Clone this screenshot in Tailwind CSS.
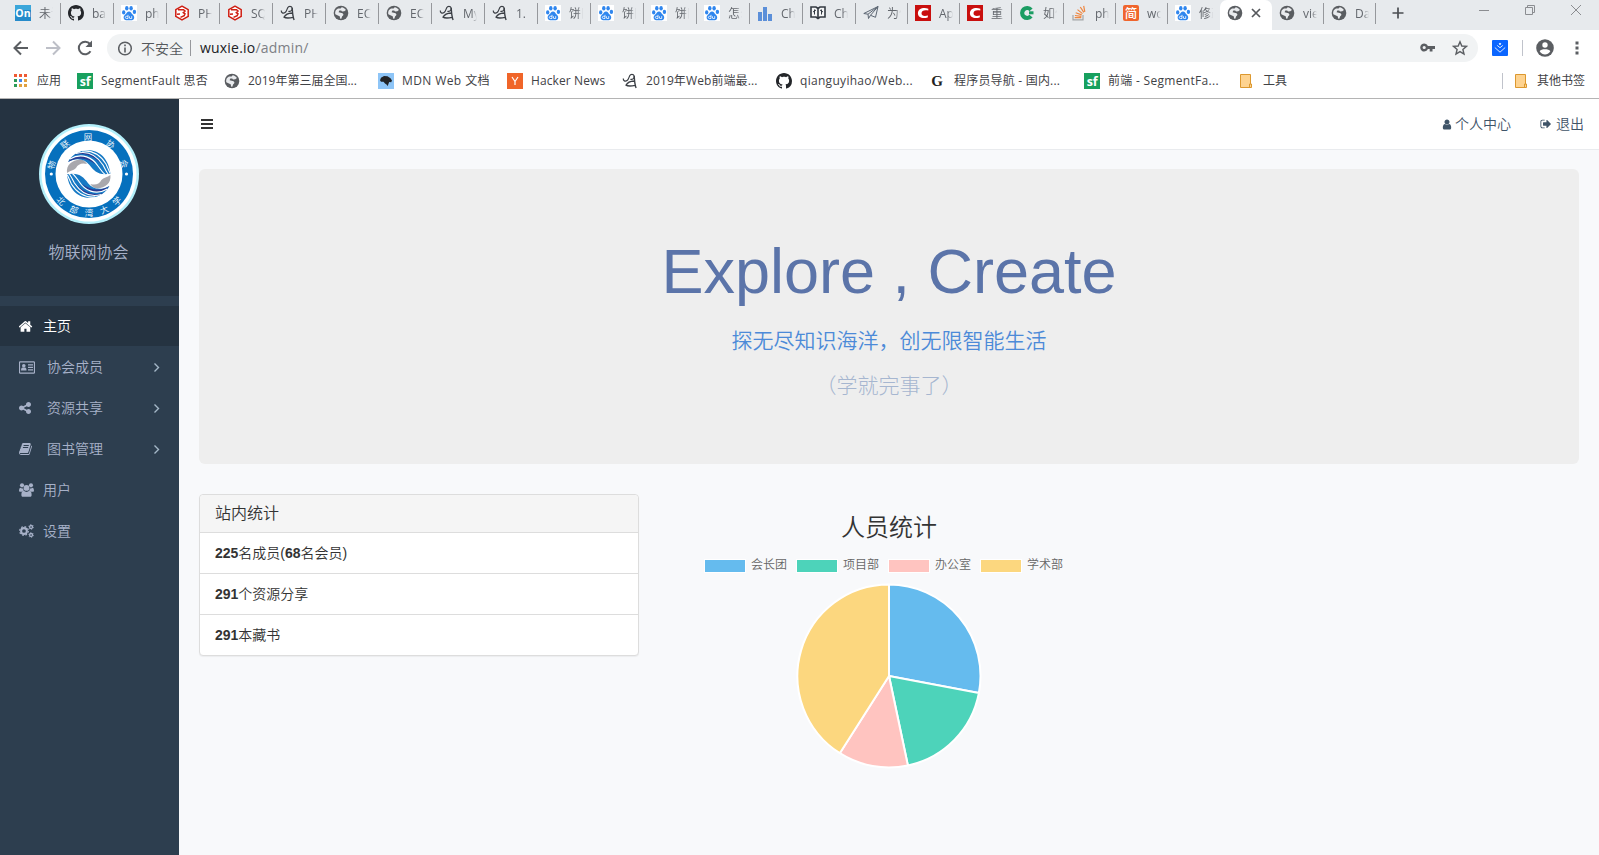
<!DOCTYPE html>
<html lang="zh-CN">
<head>
<meta charset="utf-8">
<title>物联网协会</title>
<script src="https://cdn.jsdelivr.net/npm/@tailwindcss/browser@4"></script>
</head>
<body class="h-[855px] w-[1599px] overflow-hidden bg-[#f8f9fb] font-['Liberation_Sans','Noto_Sans_CJK_SC',sans-serif] text-[14px] font-[350] text-[#333]">
<svg class="hidden">
  <symbol id="globe" viewBox="0 0 16 16"><circle cx="8" cy="8" r="7.300" fill="#5a5d61"/><path d="M8.700 2.200c1.600.2 3.400 1.300 4.200 2.900L11.300 6.300 9 6.500 8.200 5.400 6.300 5.600 5.600 7.200 7.600 7.800 10 8.200 10.600 9.900 9.200 11.300 8.300 13.700 7 13.600 6.900 11.600 5 10.400 2.300 9.300c-.3-1.500-.1-3 .7-4.300l2-1.400 2.600-.1z" fill="#e9ebee"/><path d="M8 6.900l5.500.6-1.200 3.600-2-.3.600-1.500-1-.8z" fill="#5a5d61"/></symbol>
  <symbol id="github" viewBox="0 0 16 16"><path fill="#24262a" d="M8 0C3.580 0 0 3.580 0 8c0 3.540 2.290 6.530 5.470 7.590.4.070.55-.17.55-.38 0-.19-.01-.82-.01-1.490-2.010.37-2.530-.49-2.690-.94-.09-.23-.48-.94-.82-1.130-.28-.15-.68-.52-.01-.53.63-.01 1.080.58 1.230.82.720 1.210 1.870.87 2.330.66.070-.52.280-.87.510-1.070-1.780-.2-3.640-.89-3.640-3.950 0-.87.310-1.590.820-2.150-.08-.2-.36-1.020.08-2.120 0 0 .67-.21 2.200.82.640-.18 1.320-.27 2-.27s1.360.09 2 .27c1.530-1.040 2.200-.82 2.200-.82.440 1.100.160 1.920.08 2.120.510.560.820 1.270.820 2.150 0 3.070-1.870 3.750-3.650 3.950.290.250.540.730.540 1.480 0 1.070-.01 1.930-.01 2.200 0 .21.150.46.550.38A8 8 0 0 0 16 8c0-4.420-3.580-8-8-8z"/></symbol>
  <symbol id="baidu" viewBox="0 0 16 16"><path fill="#fff" d="M0 0h16v16H0z"/><g fill="#2f86ee"><ellipse cx="2.700" cy="7.400" rx="1.700" ry="2.100"/><ellipse cx="5.800" cy="3.300" rx="1.700" ry="2.300"/><ellipse cx="10.100" cy="3.300" rx="1.700" ry="2.300"/><ellipse cx="13.400" cy="6.900" rx="1.700" ry="2.100"/><path d="M8 6.600c1.900 0 2.300 1.900 3.900 3.200 1.900 1.500 1.900 5.400-1.100 5.400H5.200c-3 0-3.300-3.900-1.200-5.400C5.700 8.500 6.200 6.600 8 6.600z"/></g><path d="M7 9.800v3.700H5.300c-1.300 0-1.300-2.200 0-2.200H7m1.500 0v1.800c0 .3.200.4.600.4h1.600v-2.300" fill="none" stroke="#fff" stroke-width=".8"/></symbol>
  <symbol id="hex" viewBox="0 0 16 16"><path d="M8 1.200l6.200 3.500v6.700L8 14.900l-6.200-3.500V4.700z" fill="#fff" stroke="#cf1e12" stroke-width="1.500" stroke-linejoin="round"/><path d="M4 4.700h5.500L11 6 9.300 7.600l1.700 1.200-.8 1.800-3.700 1.800M3 9.200l3-.2" fill="none" stroke="#cf1e12" stroke-width="1.500"/></symbol>
  <symbol id="zhang" viewBox="0 0 16 16"><path d="M1.300 5.500c-.3 2.300 1.900 3.300 3.800 2 1.500-1 2-3.500 2.600-4.800.8-1.700 3.700-1.700 4.400 0 .8 2.100-1.700 4.400-3.700 3.500" fill="none" stroke="#3b3f45" stroke-width="1.200"/><path d="M12.200 3c.3 4.500.4 8.300 1.900 12M12 8C9 8.200 5.500 9.500 4.100 12.100c1.300 1 6.300.8 9.100.3" fill="none" stroke="#3b3f45" stroke-width="1.400"/></symbol>
  <symbol id="cred" viewBox="0 0 16 16"><path fill="#c90f0e" d="M0 0h16v16H0z"/><path d="M13.300 5.500V3.700C8 2.100 3 3.800 2.900 8.300c0 4.300 4.700 5.600 9.800 4.100l.3-2c-3.600 1-6.500.5-6.500-2.100 0-2.800 3-3.700 6.800-2.800z" fill="#fff"/></symbol>
  <symbol id="folder" viewBox="0 0 16 16"><path d="M1.500 1.500h10v9.500h1v3.500h-11z" fill="#fed390" stroke="#dc982f"/><path d="M10.500 14v-3h1.500" fill="none" stroke="#dc982f"/></symbol>
  <symbol id="sf" viewBox="0 0 16 16"><path fill="#18a05e" d="M0 0h16v16H0z"/><text x="8.200" y="12.500" text-anchor="middle" font-family="Open Sans" font-weight="700" font-size="12.500" fill="#fff">sf</text></symbol>
  <symbol id="chev" viewBox="0 0 8 12"><path d="M1.500 2l4 4-4 4" fill="none" stroke="#a5b8c8" stroke-width="1.400"/></symbol>
</svg>

<!-- Browser tab strip -->
<div class="flex h-[30px] bg-[#e7eaed] pl-2 font-['Open_Sans','Noto_Sans_CJK_SC',sans-serif] text-[12px] leading-[18px] font-normal text-[#63676d] [&_i]:mt-[3px] [&_i]:ml-auto [&_i]:h-[21px] [&_i]:w-px [&_i]:bg-[#96989c] [&_span]:mt-[5px] [&_span]:ml-2 [&_span]:w-[14px] [&_span]:overflow-hidden [&_span]:whitespace-nowrap [&_span]:mask-r-from-60% [&_svg]:mt-[5px] [&_svg]:ml-[7px] [&_svg]:size-4 [&_svg]:shrink-0">
  <div class="flex w-[53px]"><svg viewBox="0 0 16 16"><path fill="#268bca" d="M0 0h16v16H0z"/><path fill="#3ba6da" d="M0 0h16v5H0z"/><text x="8" y="12.200" text-anchor="middle" font-family="Open Sans" font-weight="700" font-size="10.500" fill="#fff">On</text></svg><span>未读</span><i></i></div>
  <div class="flex w-[53px]"><svg><use href="#github"/></svg><span>ban</span><i></i></div>
  <div class="flex w-[53px]"><svg><use href="#baidu"/></svg><span>php</span><i></i></div>
  <div class="flex w-[53px]"><svg><use href="#hex"/></svg><span>PHP</span><i></i></div>
  <div class="flex w-[53px]"><svg><use href="#hex"/></svg><span>SQL</span><i></i></div>
  <div class="flex w-[53px]"><svg><use href="#zhang"/></svg><span>PHP</span><i></i></div>
  <div class="flex w-[53px]"><svg><use href="#globe"/></svg><span>EC</span><i></i></div>
  <div class="flex w-[53px]"><svg><use href="#globe"/></svg><span>EC</span><i></i></div>
  <div class="flex w-[53px]"><svg><use href="#zhang"/></svg><span>My</span><i></i></div>
  <div class="flex w-[53px]"><svg><use href="#zhang"/></svg><span>1.</span><i></i></div>
  <div class="flex w-[53px]"><svg><use href="#baidu"/></svg><span>饼图</span><i></i></div>
  <div class="flex w-[53px]"><svg><use href="#baidu"/></svg><span>饼图</span><i></i></div>
  <div class="flex w-[53px]"><svg><use href="#baidu"/></svg><span>饼图</span><i></i></div>
  <div class="flex w-[53px]"><svg><use href="#baidu"/></svg><span>怎么</span><i></i></div>
  <div class="flex w-[53px]"><svg viewBox="0 0 16 16"><path fill="#5b8fd9" d="M1 7h4v9H1zM6 2h4v14H6zM11 9h4v7h-4z"/></svg><span>Cha</span><i></i></div>
  <div class="flex w-[53px]"><svg viewBox="0 0 16 16"><path d="M1 2h5l2 1.500L10 2h5v10h-5l-2 1.500L6 12H1zM8 3.500v10" fill="#f5f6f7" stroke="#343a42" stroke-width="1.600"/><path d="M4.500 4.500v5M3 7l3-2M11.500 4.500v5M10 5l3 2" stroke="#343a42" fill="none"/></svg><span>Cha</span><i></i></div>
  <div class="flex w-[52px]"><svg viewBox="0 0 16 16"><path d="M.8 8.500L15 1.500l-2.500 10.800-5-2-2 3.200-.5-4.300zM5 9.200l10-7.700-7.500 8.800" fill="none" stroke="#5c6673" stroke-width="1"/></svg><span>为什</span><i></i></div>
  <div class="flex w-[52px]"><svg><use href="#cred"/></svg><span>Apa</span><i></i></div>
  <div class="flex w-[52px]"><svg><use href="#cred"/></svg><span>重</span><i></i></div>
  <div class="flex w-[52px]"><svg viewBox="0 0 16 16"><path d="M12 4.800A5 5 0 1 0 12 11.200" fill="none" stroke="#1c9d63" stroke-width="4.200"/><path d="M10 6.300h4.500v3H10z" fill="#1c9d63"/></svg><span>如何</span><i></i></div>
  <div class="flex w-[52px]"><svg viewBox="0 0 16 16"><path d="M2 10v4.800h10V10" fill="none" stroke="#a3a5a8" stroke-width="1.200"/><path d="M3.700 12.700h6.600M3.900 10.500l6.500.9M4.700 7.700l6 2.200M6.500 4.600l5 4M9.300 2l3.500 5.400M12.700.8l1.100 6" stroke="#ee8640" stroke-width="1.200" fill="none"/></svg><span>php</span><i></i></div>
  <div class="flex w-[52px]"><svg viewBox="0 0 16 16"><rect width="16" height="16" rx="2" fill="#f0652d"/><text x="8" y="12.500" text-anchor="middle" font-family="Noto Sans CJK SC" font-weight="500" font-size="12.500" fill="#fff">简</text></svg><span>wo</span><i></i></div>
  <div class="flex w-[52px]"><svg><use href="#baidu"/></svg><span>修改</span></div>
  <div class="flex w-[52px] rounded-t-[7px] bg-white"><svg><use href="#globe"/></svg><svg viewBox="0 0 16 16"><path d="M2 4l8 8M10 4l-8 8" stroke="#55585c" stroke-width="1.700"/></svg></div>
  <div class="flex w-[52px]"><svg><use href="#globe"/></svg><span>vie</span><i></i></div>
  <div class="flex w-[52px]"><svg><use href="#globe"/></svg><span>Da</span><i></i></div>
  <svg class="translate-x-[7px]" viewBox="0 0 16 16"><path d="M8 2.500v11M2.500 8h11" stroke="#4b4e52" stroke-width="1.700"/></svg>
  <div class="ml-auto flex gap-[23px] pr-[15px]">
    <svg class="-translate-y-1" viewBox="0 0 16 16"><path d="M3 9.500h10" stroke="#8b8d91"/></svg>
    <svg class="-translate-y-1" viewBox="0 0 16 16"><path d="M3.500 6.500h7v7h-7zM5.500 6.500v-2h7v7h-2" fill="none" stroke="#8b8d91"/></svg>
    <svg class="-translate-y-1" viewBox="0 0 16 16"><path d="M3 4l10 10M13 4L3 14" stroke="#8b8d91"/></svg>
  </div>
</div>

<!-- Address bar -->
<div class="flex h-[36px] items-center bg-white pl-[12px] font-['Open_Sans','Noto_Sans_CJK_SC',sans-serif] text-[14px] font-normal [&_svg]:shrink-0">
  <svg class="size-[18px]" viewBox="0 0 18 18"><path d="M16 9H3M9 2.500L2.500 9 9 15.500" fill="none" stroke="#5b5e62" stroke-width="2"/></svg>
  <svg class="ml-[14px] size-[18px]" viewBox="0 0 18 18"><path d="M2 9h13M9 2.500L15.500 9 9 15.500" fill="none" stroke="#bdbfc7" stroke-width="2"/></svg>
  <svg class="ml-[14px] size-[18px]" viewBox="0 0 18 18"><path d="M14.500 12.300A6.300 6.300 0 1 1 14 5" fill="none" stroke="#5b5e62" stroke-width="2"/><path d="M16 1.500V8H9.500z" fill="#5b5e62"/></svg>
  <div class="ml-[13px] flex h-[28px] w-[1371px] items-center rounded-full bg-[#f1f3f4] pl-[11px] pr-[10px]">
    <svg class="size-[15px]" viewBox="0 0 15 15"><circle cx="7" cy="7.500" r="6.300" fill="none" stroke="#5b5e62" stroke-width="1.500"/><path d="M7 6.500v5M7 3.500v1.800" stroke="#5b5e62" stroke-width="1.600"/></svg>
    <span class="ml-2 font-[350] text-[#55585c]">不安全</span>
    <span class="ml-[7px] h-4 w-px bg-[#96989c]"></span>
    <span class="ml-[9px] -translate-y-px tracking-[.2px] text-[#202124]">wuxie.io<span class="text-[#7d8085]">/admin/</span></span>
    <svg class="ml-auto size-4" viewBox="0 0 16 16"><path d="M7.900 6A4 4 0 1 0 7.900 9h1.800v2.500h2.800V9H15V6zM4.200 9.100a1.600 1.600 0 1 1 0-3.200 1.600 1.600 0 0 1 0 3.200z" fill="#5b5e62" fill-rule="evenodd"/></svg>
    <svg class="ml-4 size-4" viewBox="0 0 16 16"><path d="M8 1.800l1.800 4.200 4.600.4-3.500 3 1.100 4.600L8 11.600 4 14l1.100-4.600-3.500-3 4.600-.4z" fill="none" stroke="#5b5e62" stroke-width="1.400"/></svg>
  </div>
  <svg class="ml-[14px] size-4" viewBox="0 0 16 16"><rect width="16" height="16" rx="1" fill="#0a66ff"/><path d="M8 3l1 .9-1 1-1-1zM5.200 5.400L8 7.700l2.800-2.300M2.800 7.500L8 12.200l5.200-4.700" fill="none" stroke="#d9e8ff"/></svg>
  <span class="ml-[14px] h-4 w-px bg-[#c0c3cb]"></span>
  <svg class="ml-[13px] size-[18px]" viewBox="0 0 18 18"><circle cx="9" cy="9" r="8.800" fill="#5b5e62"/><circle cx="9" cy="6" r="2.700" fill="#fff"/><path d="M3.700 12.200C5 9.600 13 9.600 14.300 12.200 11.500 16.500 6.500 16.500 3.700 12.200z" fill="#fff"/></svg>
  <svg class="ml-[15px] size-4" viewBox="0 0 16 16"><path d="M6.500 1.500h3v3h-3zM6.500 6.500h3v3h-3zM6.500 11.500h3v3h-3z" fill="#5b5e62"/></svg>
</div>

<!-- Bookmarks bar -->
<div class="flex h-[33px] items-center border-b border-[#b4b4b4] bg-white pl-[13px] pb-[3px] font-['Open_Sans','Noto_Sans_CJK_SC',sans-serif] text-[12px] leading-4 font-normal whitespace-nowrap text-[#3f4246] [&>div]:flex [&>div]:shrink-0 [&>div]:items-center [&>div]:gap-2 [&_svg]:size-4 [&_svg]:shrink-0">
  <div class="w-[64px]"><svg viewBox="0 0 16 16"><path fill="#ef5a33" d="M1 1h3v3H1zM6 1h3v3H6zM11 1h3v3h-3z"/><path fill="#2a9b58" d="M1 6h3v3H1z"/><path fill="#3f86f0" d="M6 6h3v3H6z"/><path fill="#e0a040" d="M11 6h3v3h-3zM6 11h3v3H6zM11 11h3v3h-3z"/><path fill="#2a9b58" d="M1 11h3v3H1z"/></svg><span>应用</span></div>
  <div class="w-[147px]"><svg><use href="#sf"/></svg><span class="tracking-[.2px]">SegmentFault 思否</span></div>
  <div class="w-[154px]"><svg><use href="#globe"/></svg><span>2019年第三届全国...</span></div>
  <div class="w-[129px]"><svg viewBox="0 0 16 16"><path fill="#8ec5f7" d="M0 0h16v16H0z"/><path d="M2 7.200l1-2.500 3-1.700 3.500.2 3 2 1.500 2.300-.8 1.800-2-.3-.5 1.200-1 2.800-1.200-1.500L7 10.500 5.500 8.800 3 8.700z" fill="#222427"/></svg><span class="tracking-[.4px]">MDN Web 文档</span></div>
  <div class="w-[115px]"><svg viewBox="0 0 16 16"><path fill="#f06529" d="M0 0h16v16H0z"/><path d="M5 4l3 4.500L11 4M8 8.500V12" fill="none" stroke="#fff" stroke-width="1.200"/></svg><span class="tracking-[.1px]">Hacker News</span></div>
  <div class="w-[154px]"><svg><use href="#zhang"/></svg><span class="tracking-[.1px]">2019年Web前端最...</span></div>
  <div class="w-[154px]"><svg><use href="#github"/></svg><span class="tracking-[.3px]">qianguyihao/Web...</span></div>
  <div class="w-[154px]"><svg viewBox="0 0 16 16"><text x="7" y="13" text-anchor="middle" font-family="Liberation Serif" font-weight="700" font-size="15" fill="#222">G</text></svg><span class="tracking-[.2px]">程序员导航 - 国内...</span></div>
  <div class="w-[155px]"><svg><use href="#sf"/></svg><span class="tracking-[.3px]">前端 - SegmentFa...</span></div>
  <div class="gap-[7px]"><svg><use href="#folder"/></svg><span>工具</span></div>
  <div class="ml-auto pr-[14px]"><span class="mr-[3px] h-4 w-px bg-[#c0c3cb]"></span><svg class="-mr-px"><use href="#folder"/></svg><span>其他书签</span></div>
</div>

<div class="flex h-[756px]">
  <!-- Sidebar -->
  <aside class="w-[179px] shrink-0 bg-[#2d3e4f] text-[#a7b1c8]">
    <div class="flex h-[197px] flex-col items-center bg-[#253341] pt-[25px] pr-[2px]">
      <svg class="size-[100px]" viewBox="0 0 100 100">
        <circle cx="50" cy="50" r="50" fill="#b4f0fb"/><circle cx="50" cy="50" r="47.500" fill="#fff"/><circle cx="50" cy="50" r="44" fill="#0670bd"/><circle cx="50" cy="50" r="33.500" fill="#fff"/>
        <g fill="#fff" font-family="Noto Sans CJK SC" font-size="8.500" text-anchor="middle">
          <text transform="translate(49 50) rotate(-76)" y="-34.500">物</text><text transform="translate(49 50) rotate(-38)" y="-34.500">联</text><text transform="translate(49 50)" y="-34.500">网</text><text transform="translate(49 50) rotate(37)" y="-34.500">协</text><text transform="translate(49 50) rotate(74)" y="-34.500">会</text>
          <text transform="translate(50 50) rotate(46)" y="42">北</text><text transform="translate(50 50) rotate(23)" y="42">部</text><text transform="translate(50 50)" y="42">湾</text><text transform="translate(50 50) rotate(-23)" y="42">大</text><text transform="translate(50 50) rotate(-46)" y="42">学</text>
        </g>
        <circle cx="12.300" cy="50" r="1.600" fill="#fff"/><circle cx="87.500" cy="50" r="1.600" fill="#fff"/>
        <g id="swirl">
          <path d="M28 49C27 41 33 36 41 35.500c4 .3 5 2 7 4.500-5-1.500-9 0-11 4-2 2.500-6 2.500-9 5z" fill="#a9a8ad"/>
          <path d="M29 38C36 23 67 18 71.500 49.500 60 52 55 47 50.500 41 46 35 38 33 29 38z" fill="#1679c4"/>
          <path d="M29 38c8-9 20-8 27 2-7-6-17-8-27-2zM35 31c10-6 22-1 27 9-7-8-16-12-27-9z" fill="#2b3990"/>
          <path d="M31 35C43 28 54 34 59 42c3 4 4 6 7 8.500M37 29.500C49 26 58 32 64 41c2 4 3 6 5 9M43 27c11-1 19 5 24 13l4 9" fill="none" stroke="#fff" stroke-width="1.100"/>
        </g>
        <use href="#swirl" transform="rotate(180 49.700 50)"/>
      </svg>
      <div class="mt-[17px] text-[16px] leading-6">物联网协会</div>
    </div>
    <nav class="mt-[10px] [&>div]:mb-px [&>div]:flex [&>div]:h-10 [&>div]:items-center [&>div]:pl-[19px] [&>div]:pr-[18px]">
      <div class="bg-[#253341] text-white"><svg class="mr-[9px] size-[15px] fill-current" viewBox="128 0 1792 1792"><path d="M1472 992v480q0 26-19 45t-45 19h-384v-384h-256v384h-384q-26 0-45-19t-19-45v-480q0-1 .5-3t.5-3l575-474 575 474q1 2 1 6zm223-69l-62 74q-8 9-21 11h-3q-13 0-21-7l-692-577-692 577q-12 8-24 7-13-2-21-11l-62-74q-8-10-7-23.500t11-21.500l719-599q32-26 76-26t76 26l244 204v-195q0-14 9-23t23-9h192q14 0 23 9t9 23v408l219 182q10 8 11 21.500t-7 23.500z"/></svg>主页</div>
      <div><svg class="mr-3 h-[13px] w-4" viewBox="0 0 16 13"><rect x=".5" y=".8" width="15" height="11.400" rx=".8" fill="none" stroke="currentColor" stroke-width="1.200"/><path d="M2 9.500c0-2 .6-3 1.500-3H6c1 0 1.500 1 1.500 3z" fill="currentColor"/><circle cx="4.800" cy="4.700" r="1.800" fill="currentColor"/><path d="M9 3.900h5M9 6.400h5M9 8.900h5" stroke="currentColor" stroke-width="1.100"/></svg>协会成员<svg class="ml-auto h-3 w-2 translate-y-[.5px]"><use href="#chev"/></svg></div>
      <div><svg class="mr-4 size-[12px] fill-current" viewBox="128 128 1536 1536"><path d="M1344 1024q133 0 226.500 93.500t93.500 226.500-93.500 226.500-226.500 93.500-226.500-93.500-93.500-226.500q0-12 2-34l-360-180q-92 86-218 86-133 0-226.500-93.500t-93.500-226.500 93.500-226.500 226.500-93.500q126 0 218 86l360-180q-2-22-2-34 0-133 93.500-226.500t226.500-93.500 226.500 93.500 93.500 226.500-93.500 226.500-226.500 93.500q-126 0-218-86l-360 180q2 22 2 34t-2 34l360 180q92-86 218-86z"/></svg>资源共享<svg class="ml-auto h-3 w-2 translate-y-[.5px]"><use href="#chev"/></svg></div>
      <div><svg class="mr-[14px] size-[14px] fill-current" viewBox="64 0 1792 1792"><path d="M1703 478q40 57 18 129l-275 906q-19 64-76.500 107.500t-122.500 43.500h-923q-77 0-148.500-53.500t-99.500-131.500q-24-67-2-127 0-4 3-27t4-37q1-8-3-21.500t-3-19.500q2-11 8-21t16.500-23.500 16.500-23.500q23-38 45-91.500t30-91.500q3-10 .5-30t-.5-28q3-11 17-28t17-23q21-36 42-92t25-90q1-9-2.500-32t.5-28q4-13 22-30.500t22-22.500q19-26 42.500-84.500t27.500-96.500q1-8-3-25.500t-2-26.500q2-8 9-18t18-23 17-21q8-12 16.500-30.500t15-35 16-36 19.500-32 26.500-23.500 36-11.500 47.500 5.500l-1 3q38-9 51-9h761q74 0 114 56t18 130l-274 906q-36 119-71.500 153.500t-128.500 34.500h-869q-27 0-38 15-11 16-1 43 24 70 144 70h923q29 0 56-15.500t35-41.500l300-987q7-22 5-57 38 15 59 43zm-1064 2q-4 13 2 22.500t20 9.500h608q13 0 25.500-9.500t16.500-22.500l21-64q4-13-2-22.500t-20-9.500h-608q-13 0-25.500 9.500t-16.500 22.500zm-83 256q-4 13 2 22.500t20 9.500h608q13 0 25.500-9.500t16.500-22.500l21-64q4-13-2-22.500t-20-9.500h-608q-13 0-25.500 9.500t-16.500 22.500z"/></svg>图书管理<svg class="ml-auto h-3 w-2 translate-y-[.5px]"><use href="#chev"/></svg></div>
      <div><svg class="mr-[9px] h-[14px] w-[15px] fill-current" viewBox="0 0 16 15"><circle cx="3.200" cy="2.500" r="2.200"/><circle cx="12.800" cy="2.500" r="2.200"/><path d="M0 8.500C0 6.500.5 5 1.500 5c1 1 2.500 1 3 .6 0 1.200.2 1.800.7 2.600-1 0-1.600.4-2.200 1.200H1.300C.5 9.400 0 9 0 8.500zM16 8.500c0-2-.5-3.500-1.500-3.500-1 1-2.500 1-3 .6 0 1.200-.2 1.800-.7 2.600 1 0 1.600.4 2.200 1.200h1.700c.8 0 1.300-.4 1.300-.9z"/><circle cx="8" cy="5.300" r="3.100"/><path d="M2.500 12.800c0-2.700.8-4.400 2.500-4.400 1.800 1.600 4.200 1.600 6 0 1.700 0 2.500 1.700 2.500 4.400 0 1.300-.8 2-1.900 2H4.400c-1.100 0-1.900-.7-1.900-2z"/></svg>用户</div>
      <div><svg class="mr-[9px] h-[14px] w-[15px]" viewBox="0 0 16 15" fill="none" stroke="currentColor"><circle cx="5.300" cy="7.500" r="3.100" stroke-width="2.200"/><circle cx="5.300" cy="7.500" r="4.700" stroke-width="1.200" stroke-dasharray="1.850 1.840"/><circle cx="12.900" cy="3.200" r="1.600" stroke-width="1.400"/><circle cx="12.900" cy="3.200" r="2.600" stroke-width=".8" stroke-dasharray="1.300 1.420"/><circle cx="12.900" cy="11.800" r="1.600" stroke-width="1.400"/><circle cx="12.900" cy="11.800" r="2.600" stroke-width=".8" stroke-dasharray="1.300 1.420"/></svg>设置</div>
    </nav>
  </aside>

  <main class="flex-1">
    <header class="flex h-[51px] items-center border-b border-[#e9ebee] bg-white pr-[15px] pl-[22px] text-[#3f5468]">
      <svg class="h-[10px] w-3" viewBox="0 0 12 10"><path d="M0 0h12v2H0zM0 4h12v2H0zM0 8h12v2H0z" fill="#333"/></svg>
      <svg class="ml-auto h-[11px] w-[10px] fill-current" viewBox="128 128 1536 1536"><path d="M1536 1399q0 109-62.500 187t-150.500 78h-854q-88 0-150.500-78t-62.500-187q0-85 8.500-160.500t31.500-152 58.500-131 94-89 134.500-34.500q131 128 313 128t313-128q76 0 134.500 34.500t94 89 58.500 131 31.500 152 8.500 160.500zm-256-887q0 159-112.500 271.500t-271.500 112.500-271.500-112.500-112.500-271.500 112.500-271.500 271.500-112.500 271.500 112.500 112.500 271.500z"/></svg>
      <span class="ml-[3px]">个人中心</span>
      <svg class="ml-[29px] size-[12px] fill-current" viewBox="0 0 1792 1792"><path d="M704 1440q0 4 1 20t.5 26.500-3 23.500-10 19.500-20.500 6.500h-320q-119 0-203.500-84.500t-84.500-203.500v-704q0-119 84.500-203.500t203.500-84.500h320q13 0 22.500 9.500t9.500 22.500q0 4 1 20t.5 26.500-3 23.500-10 19.500-20.500 6.500h-320q-66 0-113 47t-47 113v704q0 66 47 113t113 47h312l11.500 1 11.500 3 8 5.500 7 9 2 13.500zm928-544q0 26-19 45l-544 544q-19 19-45 19t-45-19-19-45v-288h-448q-26 0-45-19t-19-45v-384q0-26 19-45t45-19h448v-288q0-26 19-45t45-19 45 19l544 544q19 19 19 45z"/></svg>
      <span class="ml-1">退出</span>
    </header>

    <div class="px-5 pt-[19px]">
      <section class="h-[295px] rounded-[6px] bg-[#eee] pt-[67px] text-center">
        <h1 class="text-[63px] leading-[70px] text-[#5b74a9]">Explore , Create</h1>
        <p class="mt-[20px] text-[21px] leading-[30px] text-[#4c8ad8]">探无尽知识海洋，创无限智能生活</p>
        <p class="mt-[15px] text-[21px] leading-[30px] font-light text-[#a6b6d0]">（学就完事了）</p>
      </section>

      <div class="mt-[30px] flex">
        <section class="h-[162px] w-[440px] rounded-[4px] border border-[#ddd] bg-white text-[#333] shadow-[0_1px_1px_rgba(0,0,0,.05)] [&>div]:flex [&>div]:h-[41px] [&>div]:items-center [&>div]:border-t [&>div]:border-[#ddd] [&>div]:px-[15px]">
          <h2 class="flex h-[37px] items-center rounded-t-[4px] bg-[#f5f5f5] px-[15px] text-[16px] font-[350]">站内统计</h2>
          <div><b>225</b>名成员(<b>68</b>名会员)</div>
          <div><b>291</b>个资源分享</div>
          <div><b>291</b>本藏书</div>
        </section>
        <section class="ml-[30px] w-[440px]">
          <h2 class="mt-[17px] text-center text-[24px] leading-[34px] font-[350]">人员统计</h2>
          <div class="mt-[10px] ml-[35px] flex h-[19px] items-center text-[12px] text-[#666] [&>div]:flex [&>div]:w-[92px] [&>div]:items-center [&>div]:gap-[5px] [&_i]:mt-[3px] [&_i]:box-border [&_i]:h-[14px] [&_i]:w-[42px] [&_i]:border [&_i]:border-white">
            <div><i class="bg-[#65bbee]"></i>会长团</div><div><i class="bg-[#4dd3ba]"></i>项目部</div><div><i class="bg-[#ffc4c0]"></i>办公室</div><div><i class="bg-[#fcd77f]"></i>学术部</div>
          </div>
          <svg class="mx-auto mt-[9px] size-[186px]" viewBox="-93 -93 186 186" stroke="#fff" stroke-width="2" stroke-linejoin="bevel">
            <path fill="#65bbee" d="M0 0V-91.500A91.500 91.500 0 0 1 89.900 17z"/>
            <path fill="#4dd3ba" d="M0 0L89.900 17A91.500 91.500 0 0 1 18.900 89.500z"/>
            <path fill="#ffc4c0" d="M0 0L18.900 89.500A91.500 91.500 0 0 1-49.200 77.200z"/>
            <path fill="#fcd77f" d="M0 0L-49.200 77.200A91.500 91.500 0 0 1 0-91.500z"/>
          </svg>
        </section>
      </div>
    </div>
  </main>
</div>
</body>
</html>
